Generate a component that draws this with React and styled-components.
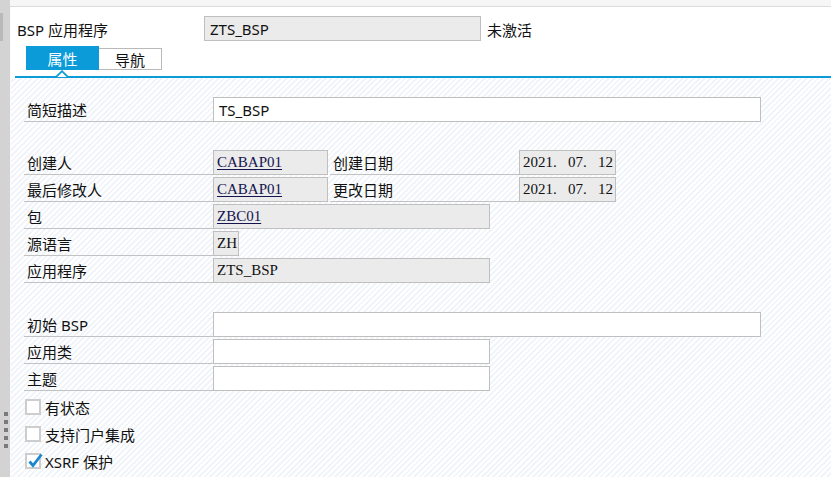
import React from 'react'
import styled, { createGlobalStyle } from 'styled-components'

const GlobalStyle = createGlobalStyle`
  html, body {
    margin: 0;
    padding: 0;
    background: #ffffff;
  }
  body {
    font-family: "Noto Sans", "Noto Sans CJK SC", sans-serif;
    font-size: 15px;
    color: #111;
  }
`

const BLUE = '#0a9bd8'
const LINE = '#c2c2c2'

const rows = [
  { label: '创建人', value: 'CABAP01', w: 115, link: true, date: { label: '创建日期', value: ['2021', '07', '12'] } },
  { label: '最后修改人', value: 'CABAP01', w: 115, link: true, date: { label: '更改日期', value: ['2021', '07', '12'] } },
  { label: '包', value: 'ZBC01', w: 277, link: true },
  { label: '源语言', value: 'ZH', w: 26 },
  { label: '应用程序', value: 'ZTS_BSP', w: 277 },
]

const App = () => {
  return (
    <>
      <GlobalStyle />
      <Page>
        <Sash>
          <SashGrip />
          <SashDots>
            {[0, 1, 2, 3, 4].map(i => <Dot key={i} />)}
          </SashDots>
        </Sash>

        <Main>
          <TopStrip />
          <Header>
            <HeaderRow>
              <HeaderLabel>BSP 应用程序</HeaderLabel>
              <Field $w={277} $ro>ZTS_BSP</Field>
              <Status>未激活</Status>
            </HeaderRow>
            <TabBar>
              <Tab $active>属性</Tab>
              <Tab>导航</Tab>
            </TabBar>
            <Notch width="12" height="7" viewBox="0 0 12 7">
              <path d="M0 7 L6 1.2 L12 7" fill="#fff" stroke={BLUE} strokeWidth="1.8" />
            </Notch>
          </Header>

          <Content>
            <Group>
              <Row>
                <Label>简短描述</Label>
                <Field $w={548}>TS_BSP</Field>
              </Row>
            </Group>

            <Group $mt={29}>
              {rows.map(r => (
                <Row key={r.label}>
                  <Label>{r.label}</Label>
                  <Field $w={r.w} $ro $serif>
                    <Value $link={r.link}>{r.value}</Value>
                  </Field>
                  {r.date && (
                    <>
                      <Label $ml={2}>{r.date.label}</Label>
                      <Field $w={97} $ro $serif>
                        <span>
                          {r.date.value[0]}<Sep>.</Sep>{r.date.value[1]}<Sep>.</Sep>{r.date.value[2]}
                        </span>
                      </Field>
                    </>
                  )}
                </Row>
              ))}
            </Group>

            <Group $mt={30}>
              <Row>
                <Label>初始 BSP</Label>
                <Field $w={548} />
              </Row>
              <Row>
                <Label>应用类</Label>
                <Field $w={277} />
              </Row>
              <Row>
                <Label>主题</Label>
                <Field $w={277} />
              </Row>
            </Group>

            <Group $mt={4}>
              <CheckRow>
                <Box />
                有状态
              </CheckRow>
              <CheckRow>
                <Box />
                支持门户集成
              </CheckRow>
              <CheckRow>
                <Box>
                  <CheckMark width="16" height="16" viewBox="0 0 16 16">
                    <path d="M2.5 8.5 L6 12.5 L14.5 1.5" fill="none" stroke="#1787d0" strokeWidth="2.8" strokeLinejoin="miter" />
                  </CheckMark>
                </Box>
                XSRF 保护
              </CheckRow>
            </Group>
          </Content>
        </Main>
      </Page>
    </>
  )
}

export default App

const Page = styled.div`
  display: flex;
  width: 831px;
  height: 477px;
  overflow: hidden;
`

const Sash = styled.div`
  width: 10px;
  flex-shrink: 0;
  background: #d3d3d3;
  display: flex;
  flex-direction: column;
  justify-content: space-between;
  padding: 13px 0 29px;
  box-sizing: border-box;
`

const SashGrip = styled.div`
  width: 3px;
  height: 28px;
  background: #b9b9b9;
`

const SashDots = styled.div`
  display: flex;
  flex-direction: column;
  gap: 4px;
  padding-left: 4px;
`

const Dot = styled.div`
  width: 4px;
  height: 4px;
  background: #7a7a7a;
`

const Main = styled.div`
  flex: 1;
  display: flex;
  flex-direction: column;
  border-left: 1px solid #fafafa;
`

const TopStrip = styled.div`
  height: 6px;
  background: #f6f6f6;
  border-bottom: 1px solid #dcdcdc;
  margin-left: -1px;
`

const Header = styled.div`
  position: relative;
  margin-left: 4px;
  padding: 10px 0 6px;
  border-bottom: 2px solid ${BLUE};
`

const HeaderRow = styled.div`
  display: flex;
  align-items: center;
  height: 24px;
`

const HeaderLabel = styled.div`
  width: 189px;
  padding-left: 2px;
  box-sizing: border-box;
  white-space: nowrap;
`

const Status = styled.div`
  margin-left: 6px;
`

const TabBar = styled.div`
  display: flex;
  align-items: flex-start;
  height: 24px;
  margin-top: 5px;
  padding-left: 11px;
`

const Tab = styled.div`
  box-sizing: border-box;
  display: flex;
  align-items: center;
  justify-content: center;
  width: ${p => (p.$active ? 73 : 63)}px;
  height: ${p => (p.$active ? 24 : 22)}px;
  margin-top: ${p => (p.$active ? 0 : 2)}px;
  background: ${p => (p.$active ? BLUE : '#fff')};
  color: ${p => (p.$active ? '#fff' : '#111')};
  border: ${p => (p.$active ? 'none' : '1px solid #b9b9b9')};
  border-left: none;
`

const Notch = styled.svg`
  position: absolute;
  left: 41px;
  bottom: -1px;
  display: block;
`

const Content = styled.div`
  flex: 1;
  display: flex;
  flex-direction: column;
  padding: 20px 0 0 13px;
  background: repeating-linear-gradient(
    135deg,
    #ffffff 0px,
    #ffffff 2px,
    #f1f5f9 2px,
    #f1f5f9 4px
  );
`

const Group = styled.div`
  display: flex;
  flex-direction: column;
  gap: 3px;
  margin-top: ${p => p.$mt || 0}px;
`

const Row = styled.div`
  display: flex;
  height: 24px;
`

const Label = styled.div`
  box-sizing: border-box;
  width: 189px;
  height: 24px;
  margin-left: ${p => p.$ml || 0}px;
  padding-left: 3px;
  display: flex;
  align-items: center;
  border-bottom: 1px solid ${LINE};
  white-space: nowrap;
`

const Field = styled.div`
  box-sizing: border-box;
  width: ${p => p.$w}px;
  height: 25px;
  margin-top: -1px;
  padding-left: ${p => (p.$serif ? 3 : 5)}px;
  display: flex;
  align-items: center;
  background: ${p => (p.$ro ? '#ebebeb' : '#ffffff')};
  border: 1px solid #bfbfbf;
  font-family: ${p => (p.$serif ? '"Liberation Serif", "Noto Sans CJK SC", serif' : 'inherit')};
  color: #111;
  white-space: nowrap;
  overflow: hidden;
`

const Value = styled.span`
  text-decoration: ${p => (p.$link ? 'underline' : 'none')};
  text-underline-offset: 2px;
  color: ${p => (p.$link ? '#14144f' : '#111')};
`

const Sep = styled.span`
  display: inline-block;
  width: 15px;
`

const CheckRow = styled.div`
  display: flex;
  align-items: center;
  height: 24px;
  padding-left: 1px;
  gap: 4px;
`

const Box = styled.div`
  position: relative;
  box-sizing: border-box;
  width: 16px;
  height: 16px;
  background: #fff;
  border: 2px solid #cdcdcd;
`

const CheckMark = styled.svg`
  position: absolute;
  left: 0;
  top: -2px;
`
